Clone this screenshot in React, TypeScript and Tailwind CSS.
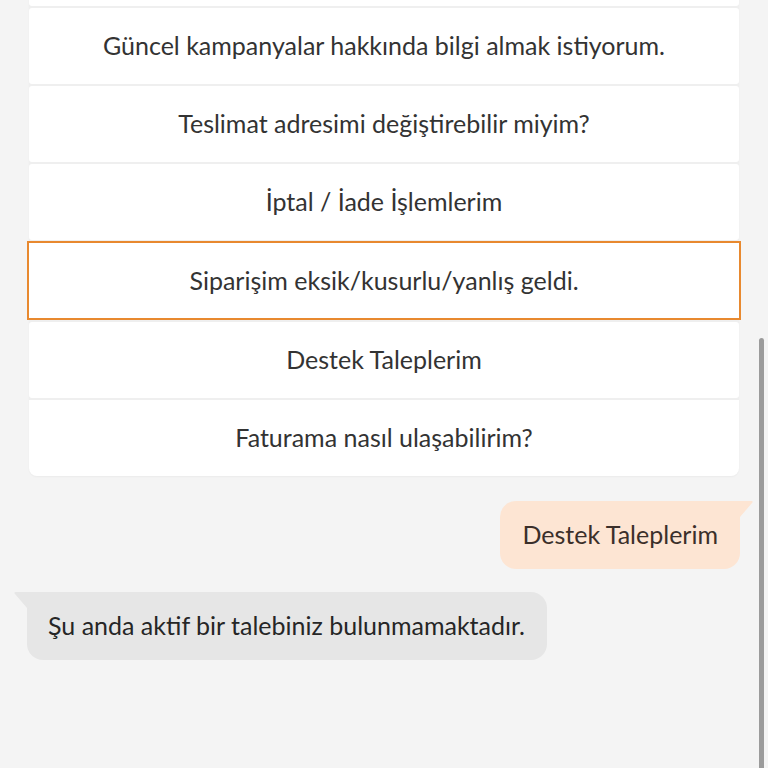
import React from 'react';

const options = [
  'Sık sorulan sorular',
  'Güncel kampanyalar hakkında bilgi almak istiyorum.',
  'Teslimat adresimi değiştirebilir miyim?',
  'İptal / İade İşlemlerim',
  'Siparişim eksik/kusurlu/yanlış geldi.',
  'Destek Taleplerim',
  'Faturama nasıl ulaşabilirim?',
];

const selected = 4;

function OptionList() {
  return (
    <div className="mt-[-70px] flex flex-col gap-[2px] rounded-lg bg-[#efefef] shadow-[0_1px_2px_rgba(0,0,0,0.04)]">
      {options.map((label, i) =>
        i === selected ? (
          <button
            key={label}
            className="-mx-[2px] -mt-px flex h-[79px] items-center justify-center border-2 border-[#e8892f] bg-white text-[25px] text-[#333333]"
          >
            {label}
          </button>
        ) : (
          <button
            key={label}
            className={`flex h-[76px] items-center justify-center bg-white text-[25px] text-[#333333] ${
              i === options.length - 1 ? 'rounded-b-lg' : 'rounded-[3px]'
            }`}
          >
            {label}
          </button>
        ),
      )}
    </div>
  );
}

function UserBubble({ text }: { text: string }) {
  return (
    <div className="flex justify-end">
      <div className="relative">
        <div className="flex h-[68px] items-center rounded-2xl rounded-tr-none bg-[#fde5d3] px-[22px] text-[25px] text-[#3b2f2a]">
          {text}
        </div>
        <svg className="absolute right-[-14px] top-0" width="16" height="18" viewBox="0 0 16 18" aria-hidden="true">
          <path d="M0 0H13.5C14.5 0 15 1 14.2 1.8L2 16C1.2 17 0 17 0 16Z" fill="#fde5d3" />
        </svg>
      </div>
    </div>
  );
}

function BotBubble({ text }: { text: string }) {
  return (
    <div className="flex justify-start">
      <div className="relative">
        <div className="flex h-[68px] items-center rounded-2xl rounded-tl-none bg-[#e6e6e6] pl-[21px] pr-[22px] text-[25px] text-[#262626]">
          {text}
        </div>
        <svg className="absolute left-[-14px] top-0" width="16" height="18" viewBox="0 0 16 18" aria-hidden="true">
          <path d="M16 0H2.5C1.5 0 1 1 1.8 1.8L14 16C14.8 17 16 17 16 16Z" fill="#e6e6e6" />
        </svg>
      </div>
    </div>
  );
}

export default function App() {
  return (
    <div
      className="relative h-[768px] w-[768px] overflow-hidden bg-[#f4f4f4]"
      style={{ fontFamily: 'Lato, "Noto Sans", sans-serif' }}
    >
      <div className="px-[29px]">
        <OptionList />
        <div className="mt-[25px] mr-[-1px]">
          <UserBubble text="Destek Taleplerim" />
        </div>
        <div className="mt-[23px] ml-[-2px]">
          <BotBubble text="Şu anda aktif bir talebiniz bulunmamaktadır." />
        </div>
      </div>
      <div className="absolute right-[4px] top-[338px] h-[440px] w-[5px] rounded-full bg-[#9b9b9b]" />
    </div>
  );
}
